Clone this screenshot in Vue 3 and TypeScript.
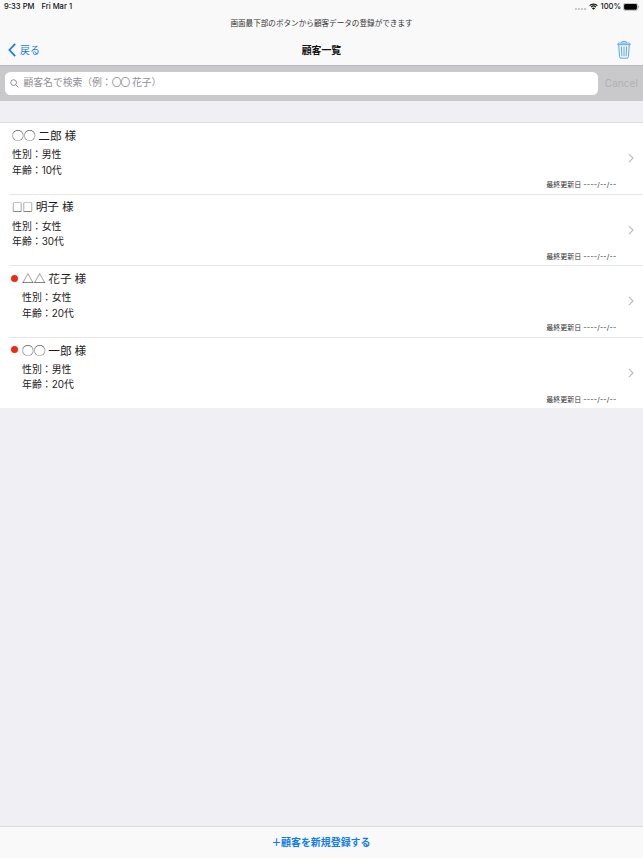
<script setup lang="ts">
interface Customer {
  mark: string
  name: string
  gender: string
  age: string
  flagged: boolean
}

const customers: Customer[] = [
  { mark: '◯◯', name: '二郎 様', gender: '男性', age: '10代', flagged: false },
  { mark: '□□', name: '明子 様', gender: '女性', age: '30代', flagged: false },
  { mark: '△△', name: '花子 様', gender: '女性', age: '20代', flagged: true },
  { mark: '◯◯', name: '一郎 様', gender: '男性', age: '20代', flagged: true },
]
</script>

<template>
  <div class="screen">
    <header class="header">
      <div class="status">
        <span class="clock">9:33 PM</span>
        <span class="date">Fri Mar 1</span>
        <span class="signal"><i v-for="n in 4" :key="n"></i></span>
        <svg class="wifi" viewBox="0 0 18 14">
          <path d="M1.2 5.2a11.2 11.2 0 0 1 15.6 0M4.1 8.2a7 7 0 0 1 9.8 0" fill="none" stroke="#111" stroke-width="2.5" />
          <path d="M9 13.4l-3.2-3.1a4.6 4.6 0 0 1 6.4 0z" fill="#111" />
        </svg>
        <span class="percent">100%</span>
        <svg class="battery" viewBox="0 0 17 8">
          <rect x="0.4" y="0.4" width="14.2" height="7" rx="1.8" fill="none" stroke="#888" stroke-width="0.5" />
          <rect x="1.1" y="1.1" width="12.8" height="5.6" rx="1.1" fill="#050505" />
          <path d="M15.3 2.6c1 .4 1 2.2 0 2.6z" fill="#888" />
        </svg>
      </div>
      <p class="notice">画面最下部のボタンから顧客データの登録ができます</p>
      <nav class="nav">
        <button class="back">
          <svg viewBox="0 0 8 14"><path d="M7.2 .9L1.4 7l5.8 6.1" fill="none" stroke="#0f7bf5" stroke-width="1.7" /></svg>
          <span>戻る</span>
        </button>
        <h1>顧客一覧</h1>
        <button class="trash">
          <svg viewBox="0 0 14 18" fill="none" stroke="#4b9ff5" stroke-width="0.95">
            <path d="M.7 3.7C.7 2.6 1.3 2.1 2.3 2.1h9.4c1 0 1.6.5 1.6 1.6zM4.6 2V1.4c0-.6.3-.9.9-.9h3c.6 0 .9.3.9.9V2M1.7 3.9l.9 11.8c.1 1 .6 1.5 1.5 1.5h5.8c.9 0 1.4-.5 1.5-1.5l.9-11.8M4.4 5.5l.5 9.8M7 5.5v9.8M9.6 5.5l-.5 9.8" />
          </svg>
        </button>
      </nav>
    </header>

    <div class="search">
      <div class="field">
        <svg viewBox="0 0 10 10" fill="none" stroke="#77777b" stroke-width="0.9"><circle cx="4" cy="4" r="3.2" /><path d="M6.4 6.4L9.4 9.4" /></svg>
        <span>顧客名で検索（例：<span class="zero">〇〇</span> 花子）</span>
      </div>
      <span class="cancel">Cancel</span>
    </div>

    <main class="list">
      <article v-for="(c, i) in customers" :key="i" class="row" :class="{ flagged: c.flagged }">
        <span v-if="c.flagged" class="dot"></span>
        <div class="info">
          <h2><span class="mark" :class="{ square: c.mark === '□□' }">{{ c.mark }}</span> {{ c.name }}</h2>
          <p>性別：{{ c.gender }}</p>
          <p>年齢：{{ c.age }}</p>
        </div>
        <span class="updated">最終更新日 <span class="dashes">----/--/--</span></span>
        <svg class="chevron" viewBox="0 0 6 10"><path d="M.9 .9L5 5 .9 9.1" fill="none" stroke="#bdbdc2" stroke-width="1.2" /></svg>
      </article>
    </main>

    <footer class="footer"><button><span class="plus">＋</span>顧客を新規登録する</button></footer>
  </div>
</template>

<style>
body {
  margin: 0;
}
</style>

<style scoped>
.screen {
  width: 643px;
  height: 858px;
  display: flex;
  flex-direction: column;
  overflow: hidden;
  background: #efeff4;
  color: #1c1c1c;
  font-family: Inter, "Noto Sans CJK JP", sans-serif;
}
h1, h2, p {
  margin: 0;
  font-weight: 400;
}
button {
  display: flex;
  align-items: center;
  padding: 0;
  border: 0;
  background: none;
  color: #0f7bf5;
  font: inherit;
}
svg {
  display: block;
  flex: none;
}
.header {
  box-sizing: border-box;
  height: 66px;
  flex: none;
  background: #f9f9f9;
  border-bottom: 1px solid #b9b9bb;
}
.status {
  display: flex;
  align-items: center;
  height: 13px;
  padding: 0 5px 0 4px;
  font-size: 7.6px;
  line-height: 13px;
  font-weight: 500;
  color: #111;
}
.date {
  margin-left: 7px;
}
.signal {
  display: flex;
  gap: 1.2px;
  margin: 5px 3px 0 auto;
}
.signal i {
  width: 1.7px;
  height: 1.7px;
  border-radius: 50%;
  background: #c2c2c2;
}
.wifi {
  width: 9px;
  height: 7px;
  margin-right: 3px;
}
.battery {
  width: 17px;
  height: 8px;
  margin: 0 -2px 0 2px;
}
.notice {
  height: 21px;
  font-size: 7.6px;
  line-height: 21px;
  text-align: center;
  color: #333;
}
.nav {
  display: grid;
  grid-template-columns: 1fr auto 1fr;
  align-items: center;
  height: 31px;
  padding: 0 12px 0 12px;
}
.back {
  gap: 4px;
  margin-left: -4px;
  font-size: 9.9px;
}
.back svg {
  width: 8px;
  height: 14px;
}
.nav h1 {
  font-size: 9.9px;
  font-weight: 700;
  line-height: 14px;
  color: #111;
}
.trash {
  justify-self: end;
}
.trash svg {
  width: 14px;
  height: 18px;
}
.search {
  box-sizing: border-box;
  display: flex;
  align-items: center;
  height: 35px;
  flex: none;
  padding: 0 5px 1px 5px;
  background: #c9c9cc;
}
.field {
  display: flex;
  align-items: center;
  gap: 4.5px;
  box-sizing: border-box;
  width: 592.5px;
  height: 23px;
  padding-left: 5px;
  border-radius: 5.5px;
  background: #fff;
  color: #8e8e93;
  font-size: 9.8px;
}
.field > span {
  padding-bottom: 1px;
  line-height: 14px;
}
.field svg {
  width: 9px;
  height: 9px;
}
.zero {
  letter-spacing: -1px;
}
.cancel {
  margin-left: auto;
  padding-bottom: 1px;
  font-size: 10.2px;
  color: #b0b0b4;
}
.list {
  margin-top: 21px;
  border-top: 1px solid #dddde1;
  background: #fff;
}
.row {
  position: relative;
  display: flex;
  box-sizing: border-box;
  height: 71.5px;
  padding-left: 12px;
}
.row:last-child {
  height: 70.5px;
}
.row.flagged {
  padding-left: 11px;
}
.row:not(:last-child)::after {
  content: "";
  position: absolute;
  left: 9px;
  right: 0;
  bottom: 0;
  height: 1px;
  background: #e6e6e8;
}
.dot {
  width: 7px;
  height: 7px;
  margin: 8.5px 4px 0 0;
  border-radius: 50%;
  background: #f02a12;
}
.info {
  flex: 1;
  padding-top: 4px;
}
.info h2 {
  height: 18px;
  font-size: 11.7px;
  line-height: 16px;
  word-spacing: -0.4px;
}
.mark {
  font-family: "Noto Sans CJK JP", sans-serif;
}
.square {
  font-size: 10.4px;
}
.info p {
  height: 15.5px;
  font-size: 9.9px;
  line-height: 19px;
}
.updated {
  height: 11px;
  margin: 56px 11px 0 0;
  font-size: 7px;
  line-height: 11px;
  color: #333;
}
.dashes {
  letter-spacing: 0.24px;
}
.chevron {
  width: 6px;
  height: 10px;
  margin: 30px 9.5px 0 0;
}
.footer {
  box-sizing: border-box;
  display: flex;
  align-items: center;
  justify-content: center;
  height: 32px;
  flex: none;
  margin-top: auto;
  padding-bottom: 2px;
  border-top: 1px solid #d9d9db;
  background: #f9f9f9;
}
.footer button {
  font-size: 9.95px;
  font-weight: 700;
  line-height: 14px;
}
.plus {
  margin: 0 -0.5px 0 -1px;
}
</style>
